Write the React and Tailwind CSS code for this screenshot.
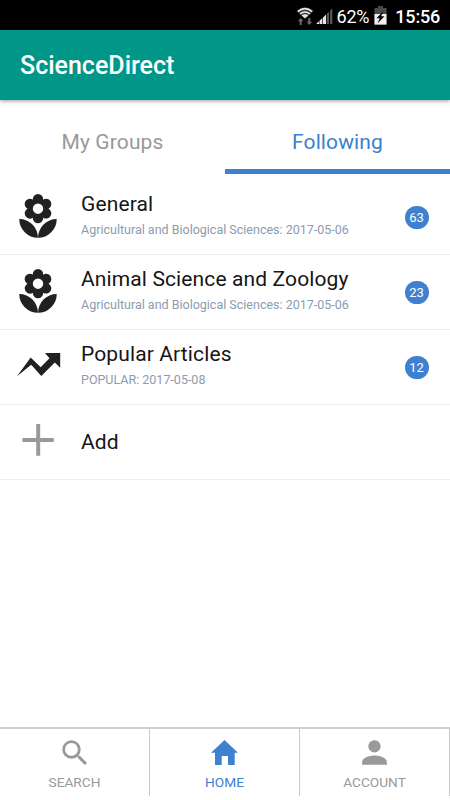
import React from "react";
import { MdLocalFlorist, MdPerson, MdSearch } from "react-icons/md";

const groups = [
  {
    title: "General",
    detail: "Agricultural and Biological Sciences: 2017-05-06",
    count: 63,
    icon: "flower",
  },
  {
    title: "Animal Science and Zoology",
    detail: "Agricultural and Biological Sciences: 2017-05-06",
    count: 23,
    icon: "flower",
  },
  {
    title: "Popular Articles",
    detail: "POPULAR: 2017-05-08",
    count: 12,
    icon: "trend",
  },
];

function WifiIcon() {
  return (
    <svg width="18" height="19" viewBox="0 0 18 19" fill="none">
      <path d="M.5 4Q9-3.5 17.5 4L9 12Z" fill="#3c3c3c" />
      <path d="M1.8 4.6Q9-1.2 16.2 4.6" stroke="#e8e8e8" strokeWidth="1.6" />
      <path d="M4 7Q9 3 14 7" stroke="#e8e8e8" strokeWidth="1.6" />
      <path d="M5.6 8.4Q9 6 12.4 8.4L9 11.2Z" fill="#e8e8e8" />
      <path d="M4.7 11l2.8 3.2H5.7V18h-2v-3.8H1.9z" fill="#6a6a6a" />
      <path d="M13.3 18l-2.8-3.2h1.8V11h2v3.8h1.8z" fill="#6a6a6a" />
    </svg>
  );
}

function SignalIcon() {
  return (
    <svg width="17" height="17" viewBox="0 0 17 17">
      <path d="M0 16L3 13.2V16zM3.5 12.7l2.9-2.7V16H3.5zM7 9.4l3.1-2.9V16H7z" fill="#e4e4e4" />
      <path d="M10.8 5.8l2.2-2V16h-2.2zM14 2.4l2.3-2V16H14z" fill="#555555" />
    </svg>
  );
}

function BatteryIcon() {
  return (
    <svg width="13" height="19" viewBox="0 0 13 19">
      <path d="M4 0h5v2h3.5v17H.5V2H4z" fill="#4a4a4a" />
      <path d="M.5 8h12v10.5H.5z" fill="#f2f2f2" />
      <path d="M9.6 5L2.4 12.3h3.4L3.5 17.5l7-7.2H7.1z" fill="#000" />
    </svg>
  );
}

function TrendIcon() {
  return (
    <svg width="44" height="25" viewBox="0 0 44 25" className="-mt-[5px] ml-[2px] fill-[#202123]">
      <path d="M0 24.3L13.7 5.4 23.7 15.2 32.5 6.3 28 .9H43.2V15.7L37.8 10.6 24.3 23.9 14.2 12.8z" />
    </svg>
  );
}

function PlusIcon() {
  return (
    <svg width="32" height="32" viewBox="0 0 32 32" className="-mt-1 fill-[#999999]">
      <path d="M14.2 0h4v14h13.6v4H18.2v13.8h-4V18H.4v-4h13.8z" />
    </svg>
  );
}

function HomeIcon() {
  return (
    <svg width="27" height="25" viewBox="0 0 27 25" className="mt-[3px] fill-[#3f81d0]">
      <path d="M13.5 0L27 12.7H23.7V25H17V16H10.7V25H4V12.7H0z" />
    </svg>
  );
}

function StatusBar() {
  return (
    <div className="flex h-[30px] items-start justify-end bg-black pr-2.5 text-white">
      <div className="mt-[7px]">
        <WifiIcon />
      </div>
      <div className="ml-[2px] mt-[8px]">
        <SignalIcon />
      </div>
      <span className="ml-[4px] mt-[5px] text-[18px] leading-[24px] tracking-[-0.2px]">62%</span>
      <div className="ml-[5px] mt-[6px]">
        <BatteryIcon />
      </div>
      <span className="ml-[8px] mt-[5px] text-[18px] font-medium leading-[24px] tracking-[-0.2px]">
        15:56
      </span>
    </div>
  );
}

function Row({ icon, title, detail, count }) {
  return (
    <li className="flex h-[75px] items-center border-b border-[#eeeeee]">
      <div className="flex w-[76px] shrink-0 justify-center">{icon}</div>
      <div className={detail ? "ml-[5px] flex-1 pb-1" : "ml-[5px] flex-1"}>
        <div className="text-[21px] leading-[28px] tracking-[0.12px] text-[#151515]">{title}</div>
        {detail && (
          <div className="mt-[2px] text-[12.5px] leading-[20px] text-[#8b9cae]">{detail}</div>
        )}
      </div>
      {count && (
        <span className="mr-[21px] flex h-[23px] w-6 items-center justify-center rounded-full bg-[#3f81d0] pr-px pt-px text-[13px] text-white">
          {count}
        </span>
      )}
    </li>
  );
}

export default function App() {
  return (
    <div className="flex h-[800px] w-[450px] flex-col overflow-hidden bg-white font-[Roboto,sans-serif]">
      <StatusBar />
      <header className="flex h-[70px] items-center bg-[#009688] pl-5 pt-[2px] shadow-[0_1px_4px_rgba(0,0,0,0.4)]">
        <h1 className="text-[25px] font-medium text-white">ScienceDirect</h1>
      </header>

      <nav className="flex h-[74px] text-[21px] tracking-[0.12px]">
        <button className="w-1/2 pt-[11px] text-[#999999]">My Groups</button>
        <button className="w-1/2 border-b-[5px] border-[#3f81d0] pt-[16px] text-[#3a80cf]">
          Following
        </button>
      </nav>

      <ul className="flex-1 pt-[6px]">
        {groups.map((g) => (
          <Row
            key={g.title}
            title={g.title}
            detail={g.detail}
            count={g.count}
            icon={
              g.icon === "flower" ? (
                <MdLocalFlorist size={50} className="text-[#202123]" />
              ) : (
                <TrendIcon />
              )
            }
          />
        ))}
        <Row title="Add" icon={<PlusIcon />} />
      </ul>

      <footer className="mb-1 flex h-[69px] border-t-2 border-[#d0d0d0] text-[13.7px] text-[#999999]">
        <button className="flex w-[150px] flex-col items-center border-r border-[#c8c8c8]">
          <span className="flex h-[44px] items-center">
            <MdSearch size={34} className="mt-[3px]" />
          </span>
          <span className="leading-[18px]">SEARCH</span>
        </button>
        <button className="flex w-[150px] flex-col items-center border-r border-[#c8c8c8] text-[#3f81d0]">
          <span className="flex h-[44px] items-center">
            <HomeIcon />
          </span>
          <span className="leading-[18px]">HOME</span>
        </button>
        <button className="flex w-[150px] flex-col items-center border-r border-[#c8c8c8]">
          <span className="flex h-[44px] items-center">
            <MdPerson size={37} className="mt-[3px]" />
          </span>
          <span className="leading-[18px]">ACCOUNT</span>
        </button>
      </footer>
    </div>
  );
}
